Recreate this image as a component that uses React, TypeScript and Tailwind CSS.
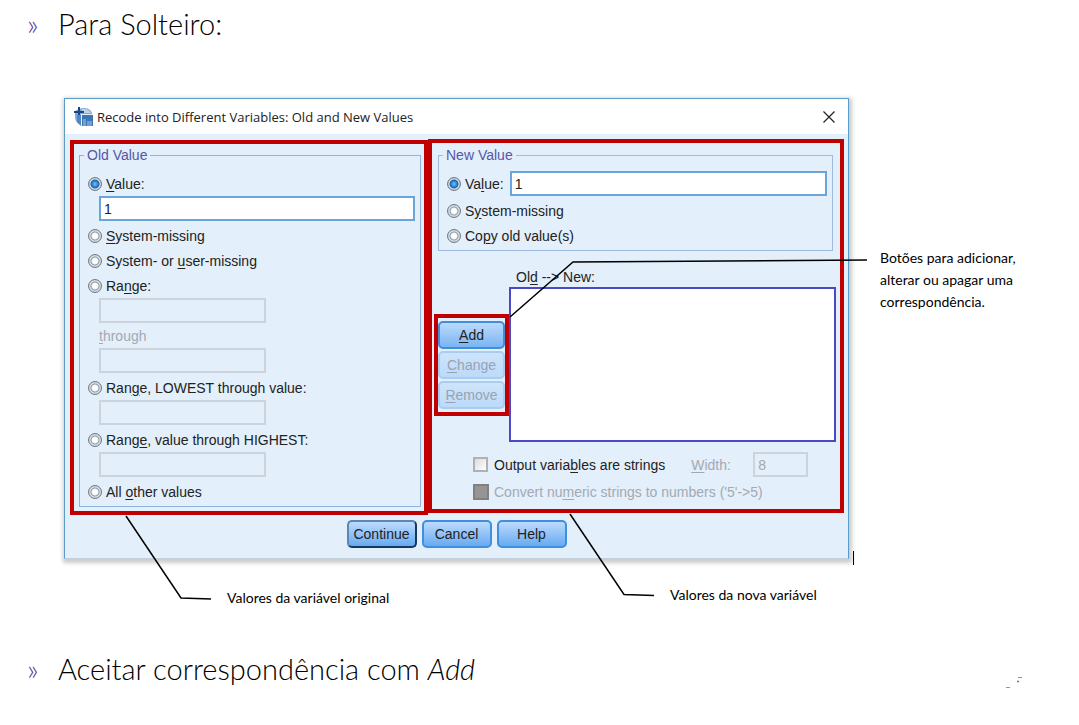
import type { ReactNode } from "react";

const INPUT_ON =
  "h-[25px] min-w-0 border-2 border-[#6aa5da] bg-white px-[3px] text-[#222]";
const INPUT_OFF =
  "h-[25px] min-w-0 border-2 border-[#cdd3da] bg-[#e3effb] px-[3px] text-[#a3a9b2]";
const ROW = "flex h-[25px] items-center gap-1";

function Radio({
  id,
  name,
  checked,
  children,
}: {
  id: string;
  name: string;
  checked?: boolean;
  children: ReactNode;
}) {
  return (
    <>
      <input
        type="radio"
        id={id}
        name={name}
        defaultChecked={checked}
        className="size-[14px] shrink-0 appearance-none rounded-full border border-[#6f7c88] bg-[radial-gradient(circle,#ffffff_0_2px,#eef3f7_3px,#8b969f_4px,#dfe5ea_5px,#c3ccd3_6px)] checked:bg-[radial-gradient(circle,#5cb4f5_0_1px,#1f7fd8_3px,#2a5f98_4px,#dfe5ea_5px,#b3bec8_6px)]"
      />
      <label htmlFor={id} className="whitespace-nowrap">
        {children}
      </label>
    </>
  );
}

function K({ children }: { children: ReactNode }) {
  return <u className="underline underline-offset-2">{children}</u>;
}

function ActionButton({ children, disabled }: { children: ReactNode; disabled?: boolean }) {
  return (
    <button
      type="button"
      disabled={disabled}
      className="h-[28px] w-full rounded-[5px] border-2 border-[#3f8fdc] bg-linear-to-b from-[#bcdafc] to-[#79b4f3] leading-none text-[#222] disabled:border-[#a9cdf0] disabled:from-[#cfe4fb] disabled:to-[#bbdafa] disabled:text-[#97a3b3]"
    >
      {children}
    </button>
  );
}

function AppIcon() {
  return (
    <svg viewBox="0 0 19 20" className="h-5 w-[19px] shrink-0" aria-hidden="true">
      <path d="M1 4 Q5 1 10 1 Q16 1 18 6 V10 H8 V19 Q1 16 1 10 Z" fill="#7fa9d6" />
      <path d="M8 2 Q14 1 17 6 H8 Z" fill="#b9d2ea" />
      <path d="M5 0 V10 M0 5 H10" stroke="#1d4585" strokeWidth="2" fill="none" />
      <path d="M3 8 V15 L7 19 V8 Z" fill="#4f87c4" />
      <path d="M7.5 7 V19 M7 7.5 H18" stroke="#e4eef8" strokeWidth="1" />
      <rect x="8" y="8" width="11" height="11" fill="#3f74b4" />
      <path d="M9 19 V12 H12 V19 Z M13 19 V14 H18 V19 Z" fill="#6f9fd3" />
    </svg>
  );
}

function OldValuePanel() {
  return (
    <div className="border-4 border-[#c00000] pt-px pr-[3px] pb-1 pl-[5px]">
      <fieldset className="h-full min-w-0 border border-[#8db3df] pb-0.5 pl-2">
        <legend className="-ml-1 px-[3px] leading-[20px] text-[#5656a8]">Old Value</legend>
        <div className="-mt-px pt-[7px] pr-[5px]">
          <div className={ROW}>
            <Radio id="old-value" name="old" checked>
              <K>V</K>alue:
            </Radio>
          </div>
          <div className="flex pl-[11px]">
            <input aria-label="Old value" defaultValue="1" className={`${INPUT_ON} flex-1`} />
          </div>
          <div className={`${ROW} mt-0.5`}>
            <Radio id="old-sys" name="old">
              <K>S</K>ystem-missing
            </Radio>
          </div>
          <div className={ROW}>
            <Radio id="old-user" name="old">
              System- or <K>u</K>ser-missing
            </Radio>
          </div>
          <div className={ROW}>
            <Radio id="old-range" name="old">
              Ra<K>n</K>ge:
            </Radio>
          </div>
          <div className="flex flex-col pl-[11px]">
            <input aria-label="Range start" disabled className={`${INPUT_OFF} w-[167px]`} />
            <label htmlFor="range-end" className="h-[25px] leading-[26px] text-[#a3a9b2]">
              <K>t</K>hrough
            </label>
            <input id="range-end" disabled className={`${INPUT_OFF} w-[167px]`} />
          </div>
          <div className={`${ROW} mt-0.5`}>
            <Radio id="old-low" name="old">
              Ran<K>g</K>e, LOWEST through value:
            </Radio>
          </div>
          <div className="flex pl-[11px]">
            <input aria-label="Highest value" disabled className={`${INPUT_OFF} w-[167px]`} />
          </div>
          <div className={`${ROW} mt-0.5`}>
            <Radio id="old-high" name="old">
              Rang<K>e</K>, value through HIGHEST:
            </Radio>
          </div>
          <div className="flex pl-[11px]">
            <input aria-label="Lowest value" disabled className={`${INPUT_OFF} w-[167px]`} />
          </div>
          <div className={`${ROW} mt-0.5`}>
            <Radio id="old-other" name="old">
              All <K>o</K>ther values
            </Radio>
          </div>
        </div>
      </fieldset>
    </div>
  );
}

function NewValuePanel() {
  return (
    <div className="-mt-px mb-0.5 border-4 border-[#c00000] pt-0.5">
      <fieldset className="mr-[7px] ml-[6px] min-w-0 border border-[#9dbbe0] pb-0.5 pl-2">
        <legend className="-ml-1 px-[3px] leading-[20px] text-[#5656a8]">New Value</legend>
        <div className="-mt-px pt-[7px] pr-[5px]">
          <div className={ROW}>
            <Radio id="new-value" name="new" checked>
              Va<K>l</K>ue:
            </Radio>
            <input aria-label="New value" defaultValue="1" className={`${INPUT_ON} ml-0.5 flex-1`} />
          </div>
          <div className={`${ROW} mt-0.5`}>
            <Radio id="new-sys" name="new">
              S<K>y</K>stem-missing
            </Radio>
          </div>
          <div className={ROW}>
            <Radio id="new-copy" name="new">
              Co<K>p</K>y old value(s)
            </Radio>
          </div>
        </div>
      </fieldset>

      <div className="flex items-start pr-1 pl-0.5">
        <div className="mt-[63px] flex w-[75px] shrink-0 flex-col gap-0.5 border-4 border-[#c00000] pt-[3px] pb-[3px]">
          <ActionButton>
            <K>A</K>dd
          </ActionButton>
          <ActionButton disabled>
            <K>C</K>hange
          </ActionButton>
          <ActionButton disabled>
            <K>R</K>emove
          </ActionButton>
        </div>
        <div className="flex min-w-0 flex-1 flex-col pt-4">
          <label htmlFor="mapping" className="pl-[7px] leading-[20px]">
            Ol<K>d</K> --&gt; New:
          </label>
          <select
            id="mapping"
            size={6}
            className="h-[155px] w-full appearance-none border-2 border-[#4a4ac4] bg-white"
          />
        </div>
      </div>

      <div className="mt-[10px] flex flex-col gap-0.5 pl-[41px]">
        <div className="flex h-[25px] items-center">
          <input
            type="checkbox"
            id="as-strings"
            className="mr-[6px] size-[15px] appearance-none border-2 border-[#b1b1b1] bg-linear-to-br from-[#dcdcdc] to-white"
          />
          <label htmlFor="as-strings" className="whitespace-nowrap">
            Output varia<K>b</K>les are strings
          </label>
          <label htmlFor="width" className="ml-[26px] w-[62px] text-[#a3a9b2]">
            <K>W</K>idth:
          </label>
          <input id="width" disabled defaultValue="8" className={`${INPUT_OFF} w-[55px]`} />
        </div>
        <div className="flex h-[25px] items-center">
          <input
            type="checkbox"
            id="to-numbers"
            disabled
            className="mr-[5px] size-[16px] appearance-none border-2 border-[#808080] bg-[#959595]"
          />
          <label htmlFor="to-numbers" className="whitespace-nowrap text-[#a3a9b2]">
            Convert nu<K>m</K>eric strings to numbers ('5'-&gt;5)
          </label>
        </div>
      </div>
    </div>
  );
}

function Dialog() {
  const button =
    "h-[28px] w-[70px] rounded-[5px] border-2 border-[#3f8fdc] bg-linear-to-b from-[#bcdafc] to-[#66aaf2] leading-none";
  return (
    <section
      aria-label="Recode into Different Variables"
      className="min-w-0 flex-1 border border-[#5b9bc9] border-b-[#c3d0dc] bg-[#e3effb] font-['Liberation_Sans',sans-serif] text-[14px] leading-[18px] text-[#222] shadow-[1px_2px_4px_2px_#cccccc]"
    >
      <header className="flex h-[35px] items-center bg-white pr-3 pl-[9px]">
        <AppIcon />
        <span className="ml-1 flex-1 font-['Open_Sans',sans-serif] text-[13px]">
          Recode into Different Variables: Old and New Values
        </span>
        <button type="button" aria-label="Close" className="p-px">
          <svg viewBox="0 0 12 12" className="size-3" aria-hidden="true">
            <path d="M0.5 0.5 L11.5 11.5 M11.5 0.5 L0.5 11.5" stroke="#222" strokeWidth="1.2" />
          </svg>
        </button>
      </header>
      <div className="grid grid-cols-[358fr_416fr] pt-[6px] pr-1 pl-[5px]">
        <OldValuePanel />
        <NewValuePanel />
      </div>
      <div className="flex justify-center gap-[5px] pt-[5px] pb-[10px]">
        <button type="button" className={`${button} border-[#5d86b4] border-r-[#17375f] border-b-[#17375f]`}>
          Continue
        </button>
        <button type="button" className={button}>
          Cancel
        </button>
        <button type="button" className={button}>
          Help
        </button>
      </div>
    </section>
  );
}

function Bullet({ children }: { children: ReactNode }) {
  return (
    <h2 className="flex h-[36px] items-center pl-[27px] text-[29px] leading-[36px] font-light">
      <span className="w-[31px] text-[#5b3a96]">»</span>
      <span>{children}</span>
    </h2>
  );
}

export default function App() {
  return (
    <main className="min-h-screen bg-white pt-[6px] font-['Lato',sans-serif] text-black">
      <Bullet>Para Solteiro:</Bullet>

      <figure className="relative mt-[56px] h-[520px] text-[14px] leading-[22px]">
        <div className="flex items-start pl-16">
          <Dialog />
          <p className="w-[230px] shrink-0 pt-[149px] pr-[50px] pl-[31px]">
            Botões para adicionar, alterar ou apagar uma correspondência.
          </p>
        </div>
        <figcaption className="flex items-start pt-[25px] pl-[227px]">
          <span className="w-[443px] pt-[3px]">Valores da variável original</span>
          <span>Valores da nova variável</span>
        </figcaption>
        <svg
          viewBox="0 0 1079 520"
          preserveAspectRatio="none"
          className="pointer-events-none absolute inset-0 h-full w-full"
          fill="none"
          stroke="#000"
          strokeWidth="1.5"
          aria-hidden="true"
        >
          <path d="M510 219 L573 164 L867 162" />
          <path d="M126 418 L181 500 L211 501" />
          <path d="M570 416 L624 496.5 L654 497.5" />
          <path d="M853.5 453 V467" strokeWidth="1" />
        </svg>
      </figure>

      <div className="flex items-start justify-between pt-[33px] pr-[56px]">
        <Bullet>
          Aceitar correspondência com <em>Add</em>
        </Bullet>
        <svg viewBox="0 0 18 14" className="mt-[25px] h-[14px] w-[18px]" aria-hidden="true">
          <path d="M13 1.5 H17 M1 11.5 H5" stroke="#8a9a9a" strokeWidth="1" />
          <path d="M12 5.5 H14" stroke="#5d7f78" strokeWidth="1.5" />
        </svg>
      </div>
    </main>
  );
}
